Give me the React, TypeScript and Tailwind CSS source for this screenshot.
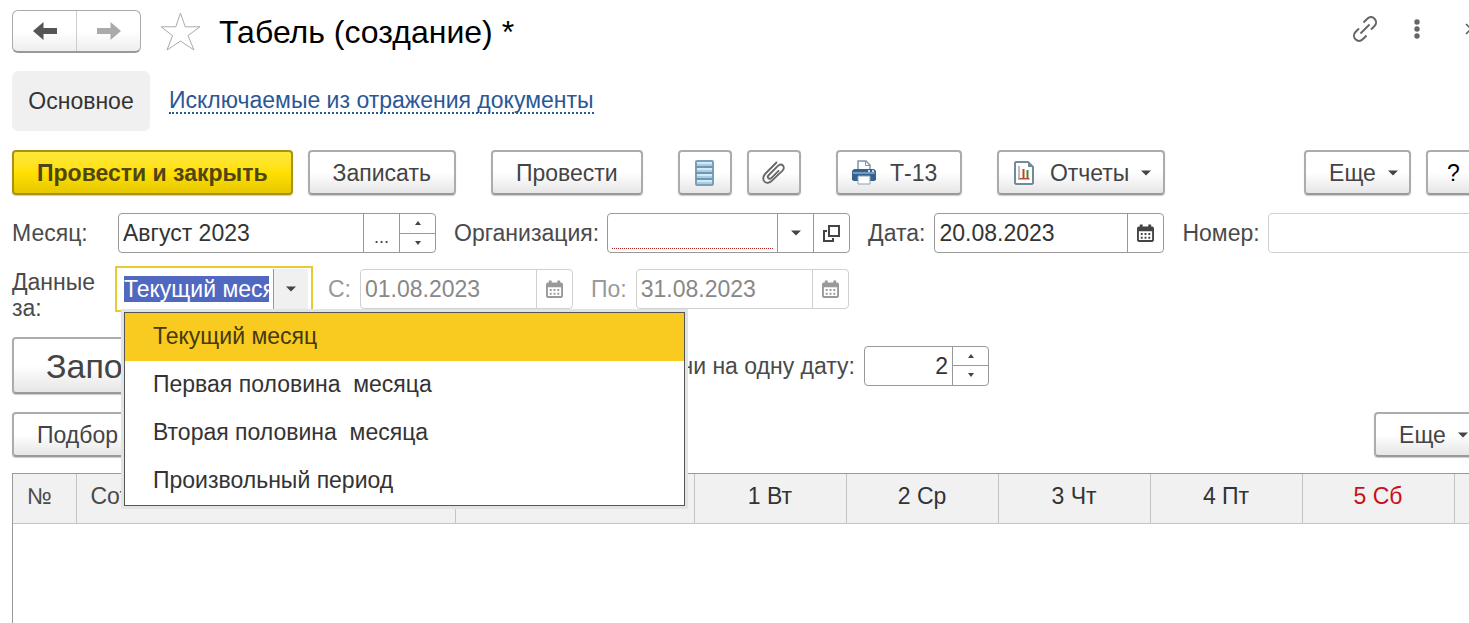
import { useState } from "react";
import clsx from "clsx";

const periods = [
  "Текущий месяц",
  "Первая половина  месяца",
  "Вторая половина  месяца",
  "Произвольный период",
];

const days = ["1 Вт", "2 Ср", "3 Чт", "4 Пт", "5 Сб"];

const Caret = () => (
  <svg width="10" height="6" viewBox="0 0 10 6" className="shrink-0" fill="#444">
    <path d="M0 0.5h10L5 5.5z" />
  </svg>
);

const CalendarIcon = () => (
  <svg width="17" height="19" viewBox="0 0 18 19" fill="currentColor">
    <path d="M3 0h3v2h6V0h3v2h1.5L18 3.5V17l-1.500 1.500h-15L0 17V3.500L1.500 2H3zM2 7v9.500h14V7z" fillRule="evenodd" />
    <path d="M4 9h2v2H4zM8 9h2v2H8zM12 9h2v2h-2zM4 13h2v2H4zM8 13h2v2H8zM12 13h2v2h-2z" />
  </svg>
);

const OpenIcon = () => (
  <svg width="17" height="17" viewBox="0 0 17 17" fill="none" stroke="#444" strokeWidth="2">
    <path d="M6 1h10v10H6z" />
    <path d="M4 6H1v10h9v-3" />
  </svg>
);

const ListIcon = () => (
  <svg width="19" height="26" viewBox="0 0 19 26">
    <rect x="1" y="1" width="17" height="24" rx="1" fill="#a9cbe3" stroke="#7c9fb6" strokeWidth="2" />
    <path d="M2 3h15M2 9h15M2 15h15M2 21h15" stroke="#d5e8f4" strokeWidth="2" />
    <path d="M1 7h17M1 13h17M1 19h17" stroke="#6b98b6" strokeWidth="2" />
  </svg>
);

const ClipIcon = () => (
  <svg width="24" height="24" viewBox="0 0 24 24" fill="none" stroke="#666" strokeWidth="1.800" strokeLinecap="round">
    <path d="M14.500 1.500 3.500 12.500c-3 3-2.600 6.500-1 8.200 1.700 1.700 4.800 1.700 7.500-1L20.500 9.700c1.800-1.800 1.600-4 .4-5.200-1.200-1.200-3.400-1.200-5 .3L6.800 14c-1.200 1.200-1.200 2.500-.5 3.200.8.8 2.100.7 3.200-.4l7-7" />
  </svg>
);

const PrinterIcon = () => (
  <svg width="24" height="25" viewBox="0 0 24 25">
    <path d="M6 10V1h8l4 4v5z" fill="#fff" stroke="#7d97ab" strokeWidth="1.500" />
    <path d="M13.500 1v4.500H18" fill="none" stroke="#7d97ab" />
    <path d="M2 9h20l2 2v9l-2 1H2l-2-1v-9z" fill="#34628c" />
    <path d="M1 13h22" stroke="#6f9cc0" strokeWidth="2" />
    <path d="M16 11h2M20 11h2" stroke="#fff" strokeWidth="1.500" />
    <path d="M6 16h12v8H6z" fill="#fff" stroke="#8ba3b5" strokeWidth="1" />
  </svg>
);

const ReportIcon = () => (
  <svg width="20" height="24" viewBox="0 0 20 24" fill="none">
    <path d="M2 1h12l5 5v16l-1 1H2l-1-1V2z" fill="#fff" stroke="#718b98" strokeWidth="2" />
    <path d="M14 1v5h5z" fill="#718b98" />
    <path d="M5 5v13M4 18h12" stroke="#777" strokeWidth="1" />
    <path d="M9.500 8v9" stroke="#d63a22" strokeWidth="2" />
    <path d="M13.500 9v8" stroke="#3c8b35" strokeWidth="2" />
    <path d="M6 17.500h9" stroke="#b04a35" />
  </svg>
);

const LinkIcon = () => (
  <svg width="26" height="26" viewBox="0 0 26 26" fill="none" stroke="#666" strokeWidth="2">
    <path d="M11.500 6.500 15 3c2.500-2.500 5.500-2.200 7.500-.3 2 2 2.200 5 0 7.300l-3.500 3.500" />
    <path d="M14.500 19.500 11 23c-2.500 2.400-5.500 2.200-7.500.3-2-2-2.200-5 0-7.300L7 12.500" />
    <path d="m8.500 17.500 9-9" />
  </svg>
);

const buttonStyle =
  "flex shrink-0 items-center justify-center rounded border-2 border-[#acacac] border-b-[#999] bg-linear-to-b from-white from-50% to-[#e6e6e6] text-[#444] shadow-[0_1px_1px_#ccc] whitespace-nowrap";

const Field = ({ id, label, value, className, muted = false, children }: any) => (
  <div className={clsx("flex h-10 items-center gap-[9px]", muted ? "text-[#999]" : "text-[#4a4a4a]")}>
    <label htmlFor={id} className="shrink-0">
      {label}
    </label>
    <div
      className={clsx(
        "flex h-10 rounded border bg-white",
        muted ? "border-[#d0d0d0] text-[#888]" : "border-[#999] text-[#333]",
        className
      )}
    >
      <input id={id} defaultValue={value} disabled={muted} className="w-full min-w-0 flex-1 pl-1 outline-none" />
      {children}
    </div>
  </div>
);

const SideButton = ({ label, muted = false, children }: any) => (
  <button
    aria-label={label}
    className={clsx(
      "flex w-9 shrink-0 items-center justify-center border-l",
      muted ? "border-[#d0d0d0] text-[#999]" : "border-[#999] text-[#444]"
    )}
  >
    {children}
  </button>
);

const Spinner = () => (
  <div className="flex w-9 shrink-0 flex-col border-l border-[#999]">
    <button aria-label="Больше" className="flex flex-1 items-center justify-center border-b border-[#999]">
      <svg width="6" height="4" viewBox="0 0 6 4" fill="#444">
        <path d="M0 4h6L3 0z" />
      </svg>
    </button>
    <button aria-label="Меньше" className="flex flex-1 items-center justify-center">
      <svg width="6" height="4" viewBox="0 0 6 4" fill="#444">
        <path d="M0 0h6L3 4z" />
      </svg>
    </button>
  </div>
);

const PeriodSelect = () => {
  const [open, setOpen] = useState(true);
  const [period, setPeriod] = useState(periods[0]);

  const handlePick = (item: string) => {
    setPeriod(item);
    setOpen(false);
  };

  return (
    <div className="relative flex h-10 w-[192px] bg-white pr-0.5 outline-2 outline-offset-1 outline-[#e6cb35]">
      <input
        id="period"
        role="combobox"
        aria-expanded={open}
        aria-controls="period-list"
        readOnly
        value={period}
        className="my-auto mr-1 ml-1.5 h-[26px] min-w-0 flex-1 bg-[#5068c0] text-white outline-none"
      />
      <button
        aria-label="Выбрать период"
        onClick={() => setOpen(!open)}
        className="flex w-[35px] shrink-0 items-center justify-center border-l border-[#999] bg-[#f0f0f0]"
      >
        <Caret />
      </button>
      {open && (
        <ul
          id="period-list"
          role="listbox"
          className="absolute top-[43px] left-1.5 z-10 w-[561px] border border-[#555] bg-white text-[#333] shadow-[0_0_0_3px_#e2e4e4]"
        >
          {periods.map((item) => (
            <li
              key={item}
              role="option"
              aria-selected={item === period}
              onClick={() => handlePick(item)}
              className={clsx(
                "flex h-12 cursor-default items-center pb-0.5 pl-7 whitespace-pre",
                item === period && "bg-[#f9ca20] text-[#443a10]"
              )}
            >
              {item}
            </li>
          ))}
        </ul>
      )}
    </div>
  );
};

const App = () => {
  return (
    <div className="min-h-screen overflow-hidden bg-white font-['Liberation_Sans',Arial,sans-serif] text-[23px] leading-[26px]">
      {/* the form is a bit wider than its window and runs under the right edge */}
      <div className="-mr-3 ml-3 flex min-h-screen flex-col">
        <header className="flex items-start pt-2.5">
          <div className="flex h-[43px] w-[129px] rounded-md border border-[#aaa] border-b-2 border-b-[#999] bg-linear-to-b from-white from-50% to-[#eee]">
            <button aria-label="Назад" className="flex flex-1 items-center justify-center border-r border-[#ccc]">
              <svg width="24" height="18" viewBox="0 0 24 18" fill="#555">
                <path d="M0 9 10.500 0v6H24v6H10.500v6z" />
              </svg>
            </button>
            <button aria-label="Вперед" className="flex flex-1 items-center justify-center">
              <svg width="24" height="18" viewBox="0 0 24 18" fill="#aaa">
                <path d="M24 9 13.500 0v6H0v6h13.500v6z" />
              </svg>
            </button>
          </div>
          <button aria-label="В избранное" className="ml-[19px] pt-0.5">
            <svg width="41" height="39" viewBox="0 0 41 39" fill="none" stroke="#aaa">
              <path d="M20.500 1 25.200 14.800H40L28 23.600 34 38 20.500 29 7 38l5.500-14.400L1 14.800h14.800z" />
            </svg>
          </button>
          <h1 className="ml-[18px] text-[32px] leading-[44px] text-black">Табель (создание) *</h1>
          <div className="mr-1 ml-auto flex h-[38px] items-center">
            <button aria-label="Ссылка" className="mr-9">
              <LinkIcon />
            </button>
            <button aria-label="Меню" className="mr-[45px]">
              <svg width="6" height="20" viewBox="0 0 6 20" fill="#666">
                <circle cx="3" cy="3" r="2.700" />
                <circle cx="3" cy="10" r="2.700" />
                <circle cx="3" cy="17" r="2.700" />
              </svg>
            </button>
            <button aria-label="Закрыть">
              <svg width="12" height="12" viewBox="0 0 12 12" stroke="#555" strokeWidth="1.500">
                <path d="m1 1 10 10M11 1 1 11" />
              </svg>
            </button>
          </div>
        </header>

        <nav className="mt-[17px] flex items-center gap-[19px]">
          <button className="h-[60px] w-[138px] rounded-md bg-[#f0f0f0] text-[#333]">Основное</button>
          <a href="#excluded" className="border-b-2 border-dotted border-[#2a5796] leading-6 text-[#2a5796]">
            Исключаемые из отражения документы
          </a>
        </nav>

        <div className="mt-[19px] flex gap-[15px]">
          <button className="flex h-[45px] shrink-0 items-center rounded border-2 border-[#a89313] bg-linear-to-b from-[#ffe838] via-[#ffe000] to-[#e6c800] px-[23px] font-bold text-[#504515] shadow-[0_1px_1px_#ccc]">
            Провести и закрыть
          </button>
          <button className={clsx(buttonStyle, "h-[45px] px-[23px]")}>Записать</button>
          <button className={clsx(buttonStyle, "ml-5 h-[45px] px-[23px]")}>Провести</button>
          <button aria-label="Движения" className={clsx(buttonStyle, "ml-5 h-[45px] w-[54px]")}>
            <ListIcon />
          </button>
          <button aria-label="Файлы" className={clsx(buttonStyle, "h-[45px] w-[54px]")}>
            <ClipIcon />
          </button>
          <button className={clsx(buttonStyle, "ml-5 h-[45px] w-[126px] gap-3.5 pr-2")}>
            <PrinterIcon />
            Т-13
          </button>
          <button className={clsx(buttonStyle, "ml-5 h-[45px] w-[168px] pl-1")}>
            <ReportIcon />
            <span className="mr-3 ml-4">Отчеты</span>
            <Caret />
          </button>
          <button className={clsx(buttonStyle, "ml-auto h-[45px] w-[107px] gap-3 pl-3")}>
            Еще
            <Caret />
          </button>
          <button className={clsx(buttonStyle, "h-[45px] w-[55px] text-black")}>?</button>
        </div>

        <div className="mt-[18px] flex gap-[18px]">
          <div className="flex text-[#4a4a4a]">
            <label htmlFor="month" className="w-[106px] shrink-0 leading-10">
              Месяц:
            </label>
            <div className="flex h-10 w-[318px] rounded border border-[#999] text-[#333]">
              <input id="month" defaultValue="Август 2023" className="min-w-0 flex-1 pl-1 outline-none" />
              <SideButton label="Выбрать месяц">
                <span className="pt-2 text-lg">...</span>
              </SideButton>
              <Spinner />
            </div>
          </div>
          <div className="flex h-10 items-center gap-2 text-[#4a4a4a]">
            <label htmlFor="org">Организация:</label>
            <div className="flex h-10 w-[243px] rounded border border-[#999]">
              <input id="org" className="mx-1 mb-[3px] min-w-0 flex-1 border-b border-dotted border-[#b02020] outline-none" />
              <SideButton label="Список организаций">
                <Caret />
              </SideButton>
              <SideButton label="Открыть организацию">
                <OpenIcon />
              </SideButton>
            </div>
          </div>
          <Field id="date" label="Дата:" value="20.08.2023" className="w-[230px]">
            <SideButton label="Календарь">
              <CalendarIcon />
            </SideButton>
          </Field>
          <div className="flex flex-1 items-center gap-2 text-[#4a4a4a]">
            <label htmlFor="number">Номер:</label>
            <input id="number" className="h-10 min-w-0 flex-1 rounded border border-[#d0d0d0] pl-1" />
          </div>
        </div>

        <div className="mt-4 flex gap-[18px]">
          <div className="flex">
            <label htmlFor="period" className="w-[106px] shrink-0 pr-2 text-[#4a4a4a]">
              Данные за:
            </label>
            <PeriodSelect />
          </div>
          <Field id="from" label="С:" value="01.08.2023" className="w-[213px]" muted>
            <SideButton label="Начало периода" muted>
              <CalendarIcon />
            </SideButton>
          </Field>
          <Field id="to" label="По:" value="31.08.2023" className="w-[213px]" muted>
            <SideButton label="Конец периода" muted>
              <CalendarIcon />
            </SideButton>
          </Field>
        </div>

        <div className="mt-4 flex items-center">
          <div className="flex w-[843px] items-center justify-between">
            <button className={clsx(buttonStyle, "h-[57px] px-8 text-[34px]")}>Заполнить</button>
            <label htmlFor="count" className="text-[#4a4a4a]">
              Видов времени на одну дату:
            </label>
          </div>
          <div className="ml-[9px] flex h-10 w-[125px] rounded border border-[#999] text-[#333]">
            <input id="count" defaultValue="2" className="min-w-0 flex-1 pr-1 text-right outline-none" />
            <Spinner />
          </div>
        </div>

        <div className="mt-[18px] flex justify-between">
          <button className={clsx(buttonStyle, "h-[45px] px-[23px]")}>Подбор</button>
          <button className={clsx(buttonStyle, "h-[45px] w-[107px] gap-3 pl-3")}>
            Еще
            <Caret />
          </button>
        </div>

        <div className="mt-4 flex-1 border-t border-l border-[#999]">
          <table className="w-full table-fixed border-collapse text-[#333]">
            <thead>
              <tr className="h-[49px] border-b border-[#c4c4c4] bg-[#f1f1f1]">
                <th className="w-[63px] border-r border-[#c4c4c4] pb-1 pl-3.5 text-left font-normal text-[#4a4a4a]">№</th>
                <th className="w-[379px] border-r border-[#c4c4c4] pb-1 pl-3.5 text-left font-normal text-[#4a4a4a]">
                  Сотрудник
                </th>
                <th className="w-[239px] border-r border-[#c4c4c4]"></th>
                {days.map((day, i) => (
                  <th
                    key={day}
                    className={clsx("w-[152px] border-r border-[#c4c4c4] pb-1 font-normal", i > 3 && "text-[#c8101c]")}
                  >
                    {day}
                  </th>
                ))}
                <th></th>
              </tr>
            </thead>
          </table>
        </div>
      </div>
    </div>
  );
};

export default App;
